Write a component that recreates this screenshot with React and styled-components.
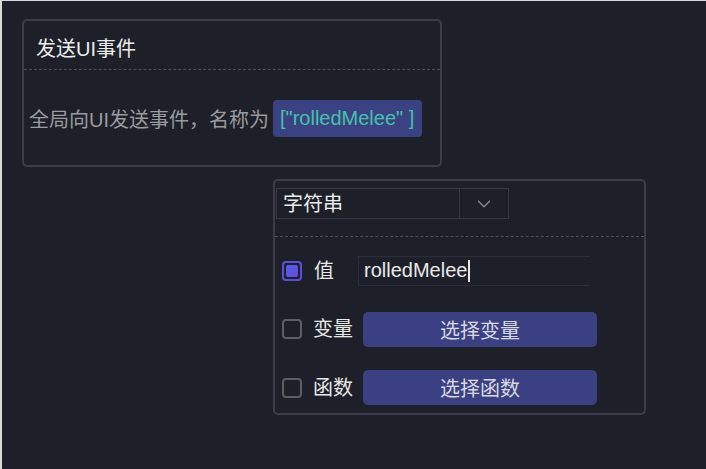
import React from 'react'
import styled, { createGlobalStyle } from 'styled-components'
import { ChevronDown } from 'lucide-react'

const GlobalStyle = createGlobalStyle`
  html, body {
    margin: 0;
    padding: 0;
    background: #1e2029;
  }
  body {
    font-family: "Liberation Sans", "Noto Sans CJK SC", sans-serif;
  }
`

const Page = styled.div`
  box-sizing: border-box;
  width: 706px;
  height: 469px;
  background: #1e2029;
  border-left: 2px solid #d9d9dc;
  border-top: 1px solid #d9d9dc;
  padding: 18px 0 0 20px;
  display: flex;
  flex-direction: column;
  align-items: flex-start;
  font-size: 20px;
`

const Card = styled.div`
  box-sizing: border-box;
  width: ${p => p.$w}px;
  height: ${p => p.$h}px;
  margin-left: ${p => p.$ml || 0}px;
  margin-top: ${p => p.$mt || 0}px;
  border: 2px solid #3b3e4a;
  border-radius: 5px;
  display: flex;
  flex-direction: column;
`

const CardHeader = styled.div`
  height: ${p => p.$h}px;
  border-bottom: 1px dashed #4c4f5a;
  display: flex;
  align-items: ${p => p.$align || 'center'};
  color: #ececec;
  line-height: 1;
`

const Title = styled.span`
  margin-left: 12px;
  margin-top: 8px;
`

const SummaryBody = styled.div`
  flex: 1;
  display: flex;
  align-items: center;
  padding: 2px 0 0 5px;
  color: #9a9a9f;
`

const Tag = styled.span`
  margin-left: 4px;
  height: 37px;
  padding: 0 8px 0 7px;
  display: flex;
  align-items: center;
  background: #3b4283;
  border-radius: 4px;
  color: #45c2a7;
`

const Select = styled.div`
  box-sizing: border-box;
  margin: 7px 0 0 1px;
  width: 233px;
  height: 31px;
  border: 1px solid #363945;
  display: flex;
`

const SelectValue = styled.div`
  flex: 1;
  display: flex;
  align-items: center;
  padding: 1px 0 0 6px;
  color: #ececec;
  border-right: 1px solid #363945;
`

const SelectArrow = styled.div`
  width: 48px;
  display: flex;
  align-items: center;
  justify-content: center;
  color: #8a8c94;
`

const Options = styled.div`
  display: flex;
  flex-direction: column;
  gap: 23.5px;
  padding: 16px 0 0 7px;
`

const Row = styled.div`
  height: 35px;
  display: flex;
  align-items: center;
`

const Check = styled.span`
  box-sizing: border-box;
  width: 20px;
  height: 20px;
  border-radius: 4px;
  border: 2px solid ${p => (p.$on ? '#5a4fd6' : '#5c5e66')};
  display: flex;
  align-items: center;
  justify-content: center;
  &::after {
    content: '';
    display: ${p => (p.$on ? 'block' : 'none')};
    width: 12px;
    height: 12px;
    border-radius: 2px;
    background: linear-gradient(135deg, #4c63e6, #6b47dc);
  }
`

const Label = styled.span`
  width: ${p => p.$w}px;
  margin-left: ${p => p.$ml}px;
  color: #e8e8e8;
  line-height: 1;
`

const Input = styled.div`
  box-sizing: border-box;
  width: 232px;
  height: 30px;
  border: 1px solid #2c2f3b;
  border-right: none;
  display: flex;
  align-items: center;
  padding-left: 5px;
  color: #eaeaea;
`

const Caret = styled.span`
  width: 1.5px;
  height: 22px;
  background: #e8e8e8;
  margin-left: 1px;
`

const Button = styled.div`
  width: 234px;
  height: 35px;
  border-radius: 5px;
  background: #3a4081;
  color: #d8d8e2;
  display: flex;
  align-items: center;
  justify-content: center;
`

export default function App() {
  return (
    <>
      <GlobalStyle />
      <Page>
        <Card $w={420} $h={148}>
          <CardHeader $h={48}>
            <Title>发送UI事件</Title>
          </CardHeader>
          <SummaryBody>
            全局向UI发送事件，名称为
            <Tag>["rolledMelee" ]</Tag>
          </SummaryBody>
        </Card>

        <Card $w={373} $h={236} $ml={251} $mt={12}>
          <CardHeader $h={55} $align="flex-start">
            <Select>
              <SelectValue>字符串</SelectValue>
              <SelectArrow>
                <ChevronDown size={22} strokeWidth={1.4} />
              </SelectArrow>
            </Select>
          </CardHeader>
          <Options>
            <Row>
              <Check $on />
              <Label $w={44} $ml={12}>值</Label>
              <Input>
                rolledMelee
                <Caret />
              </Input>
            </Row>
            <Row>
              <Check />
              <Label $w={50} $ml={11}>变量</Label>
              <Button>选择变量</Button>
            </Row>
            <Row>
              <Check />
              <Label $w={50} $ml={11}>函数</Label>
              <Button>选择函数</Button>
            </Row>
          </Options>
        </Card>
      </Page>
    </>
  )
}
